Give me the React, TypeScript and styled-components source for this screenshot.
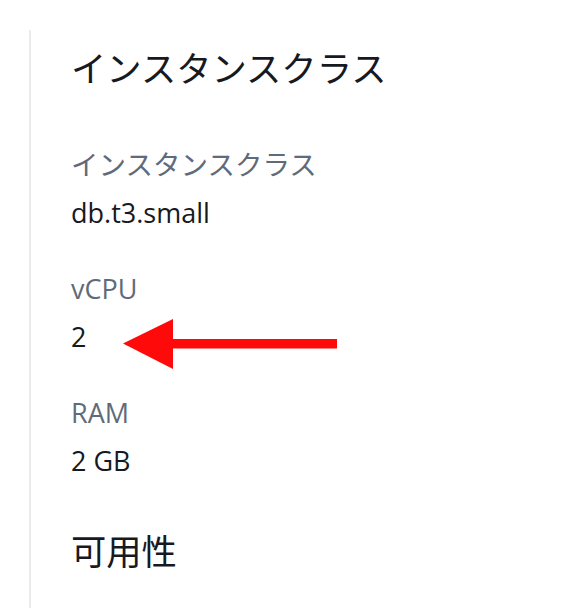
import React from "react";
import styled, { createGlobalStyle } from "styled-components";

const GlobalStyle = createGlobalStyle`
  html, body {
    margin: 0;
    padding: 0;
    background: #ffffff;
    overflow: hidden;
  }
  body {
    font-family: "Open Sans", "Noto Sans CJK JP", sans-serif;
    -webkit-font-smoothing: antialiased;
  }
`;

const Page = styled.div`
  position: relative;
  height: 608px;
  padding: 30px 0 0 29px;
  box-sizing: border-box;
  overflow: hidden;
`;

const Panel = styled.section`
  border-left: 2px solid #e9ebed;
  padding: 16px 0 0 40px;
  min-height: 700px;
  box-sizing: border-box;
  display: flex;
  flex-direction: column;
`;

const Heading = styled.h2`
  margin: 0;
  font-family: "Open Sans", "Noto Sans CJK JP", sans-serif;
  font-weight: 400;
  font-size: 35.3px;
  line-height: 44px;
  color: #16191f;
`;

const Fields = styled.dl`
  margin: 58px 0 0 0;
  display: flex;
  flex-direction: column;
  gap: 42px;
`;

const Field = styled.div`
  display: flex;
  flex-direction: column;
  gap: 14px;
`;

const Label = styled.dt<{ $jp?: boolean }>`
  margin: 0;
  font-size: ${(p) => (p.$jp ? "27.5px" : "27px")};
  line-height: 34px;
  color: #5f6b7a;
`;

const Value = styled.dd`
  margin: 0;
  font-size: 27px;
  line-height: 34px;
  color: #16191f;
`;

const SubHeading = styled(Heading)`
  margin-top: 51px;
`;

const Arrow = styled.svg`
  position: absolute;
  left: 120px;
  top: 316px;
  width: 220px;
  height: 56px;
`;

export default function App() {
  const fields = [
    { label: "インスタンスクラス", value: "db.t3.small", jp: true },
    { label: "vCPU", value: "2" },
    { label: "RAM", value: "2 GB" },
  ];
  return (
    <>
      <GlobalStyle />
      <Page>
        <Panel>
          <Heading>インスタンスクラス</Heading>
          <Fields>
            {fields.map((f) => (
              <Field key={f.label}>
                <Label $jp={f.jp}>{f.label}</Label>
                <Value>{f.value}</Value>
              </Field>
            ))}
          </Fields>
          <SubHeading>可用性</SubHeading>
        </Panel>
        <Arrow viewBox="0 0 220 56" aria-hidden="true">
          <rect x="50" y="23" width="167" height="9.5" fill="#fe0a0a" />
          <polygon points="3,27.5 53,3 53,53" fill="#fe0a0a" />
        </Arrow>
      </Page>
    </>
  );
}
